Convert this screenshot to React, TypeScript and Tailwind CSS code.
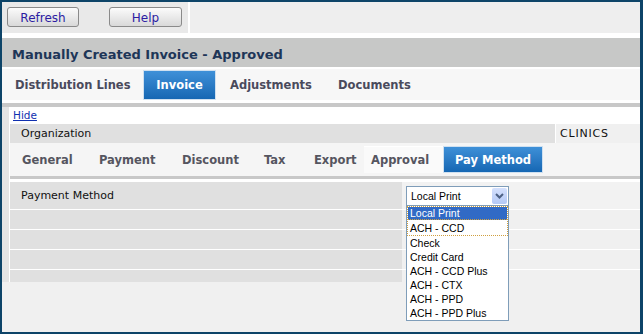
import React from "react"

const Btn = ({ label, cls }: { label: string; cls: string }) => (
  <div
    className={
      "h-[20px] pt-[1px] flex items-center justify-center rounded-[3px] border border-[#8a8a8a] bg-gradient-to-b from-[#fbfbfb] to-[#d9d9d9] text-[12px] text-[#2c1ca3] " +
      cls
    }
  >
    {label}
  </div>
)

const options = ["Check", "Credit Card", "ACH - CCD Plus", "ACH - CTX", "ACH - PPD", "ACH - PPD Plus"]

export default function App() {
  return (
    <div className="w-[643px] h-[334px] bg-[#f0f0f0] border-t-2 border-l-2 border-b-2 border-r-[3px] border-[#0d4468] flex flex-col overflow-hidden font-['DejaVu_Sans',Verdana,sans-serif]">
      {/* toolbar */}
      <div className="h-[31px] flex shrink-0">
        <div className="w-[186px] bg-[#e9e9e9] flex items-start pt-[5px] pl-[5px]">
          <Btn label="Refresh" cls="w-[72px]" />
          <Btn label="Help" cls="w-[73px] ml-[30px]" />
        </div>
        <div className="w-[2px] bg-white" />
        <div className="flex-1 bg-[#eeeeee]" />
      </div>
      <div className="h-[5px] bg-white shrink-0" />

      {/* title */}
      <div className="h-[29px] shrink-0 bg-[#c7c8c7] pl-[10px] pt-[4px] flex items-center text-[13px] font-bold text-[#1e3658]">
        Manually Created Invoice - Approved
      </div>
      <div className="h-[2px] bg-white shrink-0" />

      {/* main tabs */}
      <div className="h-[31px] shrink-0 bg-[#f7f7f7] flex pt-[1px] text-[11.5px] font-bold text-[#4a4a5c]">
        <div className="w-[141px] h-[29px] pl-[13px] pt-[2px] flex items-center">Distribution Lines</div>
        <div className="w-[73px] h-[30px] pt-[2px] flex items-center justify-center border border-[#cfe0f0] bg-gradient-to-b from-[#3e90d8] to-[#1567b3] text-white">
          Invoice
        </div>
        <div className="w-[108px] h-[29px] pl-[14px] pt-[2px] flex items-center">Adjustments</div>
        <div className="h-[29px] pl-[14px] pt-[2px] flex items-center">Documents</div>
      </div>
      <div className="h-[3px] bg-white shrink-0" />

      {/* panel */}
      <div className="h-[179px] shrink-0 flex flex-col">
        <div className="h-[4px] bg-[#c8c8c8]" />
        <div className="flex flex-1">
          <div className="w-[7px] bg-[#e4e4e4]" />
          <div className="w-[1px] bg-white" />
          <div className="flex-1 flex flex-col bg-white">
            <div className="h-[17px] pl-[3px] flex items-center">
              <span className="text-[10.5px] text-[#1030b0] underline">Hide</span>
            </div>

            <div className="h-[19px] flex text-[11px] text-[#111]">
              <div className="flex-1 bg-[#e0e0e0] pl-[11px] pt-[2px] flex items-center">Organization</div>
              <div className="w-[1px] bg-white" />
              <div className="w-[84px] bg-[#f0f0f0] pl-[4px] pt-[2px] flex items-center tracking-[0.8px]">CLINICS</div>
            </div>

            {/* sub tabs */}
            <div className="h-[33px] bg-[#f5f5f5] pt-[3px] flex text-[11.5px] font-bold text-[#555560]">
              <div className="w-[76px] h-[27px] pl-[12px] pt-[2px] flex items-center">General</div>
              <div className="w-[83px] h-[27px] pl-[13px] pt-[2px] flex items-center">Payment</div>
              <div className="w-[82px] h-[27px] pl-[13px] pt-[2px] flex items-center">Discount</div>
              <div className="w-[50px] h-[27px] pl-[13px] pt-[2px] flex items-center">Tax</div>
              <div className="w-[63px] h-[27px] pl-[13px] pt-[2px] flex items-center">Export</div>
              <div className="w-[79px] h-[27px] pl-[7px] pt-[2px] flex items-center bg-[#fafafa] border-t border-white">Approval</div>
              <div className="w-[100px] h-[27px] pt-[2px] flex items-center justify-center border border-[#cfe0f0] bg-gradient-to-b from-[#3e90d8] to-[#1567b3] text-white">
                Pay Method
              </div>
            </div>
            <div className="h-[3px] bg-[#c8c8c8]" />
            <div className="h-[3px] bg-white" />

            {/* rows */}
            <div className="flex-1 flex flex-col bg-[#e0e0e0]">
              <div className="h-[28px] flex border-b border-white">
                <div className="w-[392px] bg-[#e0e0e0] pl-[11px] pt-[2px] flex items-center text-[11px] text-[#111]">Payment Method</div>
                <div className="flex-1 bg-[#f2f2f2] relative z-10">
                  <div className="ml-[4px] mt-[4px] w-[103px] h-[20px] border border-[#7f9db9] bg-white flex items-center font-['Liberation_Sans',Arial,sans-serif] text-[10.5px] text-black">
                    <span className="pl-[4px] pt-[2px] flex-1">Local Print</span>
                    <div className="w-[15px] h-[16px] mr-[1px] rounded-[2px] bg-gradient-to-b from-[#d4e0fd] to-[#b4c9f6] flex items-center justify-center">
                      <svg width="9" height="6" viewBox="0 0 9 6">
                        <polyline points="1,1 4.5,4.5 8,1" fill="none" stroke="#4d6185" strokeWidth="2" />
                      </svg>
                    </div>
                    {/* open list */}
                    <div className="absolute left-[4px] top-[24px] w-[103px] border border-t-0 border-[#7f9db9] bg-white text-[10.5px] text-black">
                      <div className="border border-dotted border-[#d0a040]">
                        <div className="h-[13px] pt-[1px] bg-[#316ac5] text-white pl-[2px] flex items-center border-b border-dotted border-[#d0a040]">
                          Local Print
                        </div>
                        <div className="h-[15px] pt-[2px] pl-[2px] flex items-center">ACH - CCD</div>
                      </div>
                      {options.map((o) => (
                        <div key={o} className="h-[14px] pt-[2px] pl-[3px] flex items-center">
                          {o}
                        </div>
                      ))}
                    </div>
                  </div>
                </div>
              </div>
              {[0, 1, 2].map((i) => (
                <div key={i} className="h-[20px] flex border-b border-white">
                  <div className="w-[392px] bg-[#e0e0e0]" />
                  <div className="flex-1 bg-[#f0f0f0]" />
                </div>
              ))}
              <div className="flex-1 flex">
                <div className="w-[392px] bg-[#e0e0e0]" />
                <div className="flex-1 bg-[#f0f0f0]" />
              </div>
            </div>
          </div>
        </div>
      </div>
    </div>
  )
}
